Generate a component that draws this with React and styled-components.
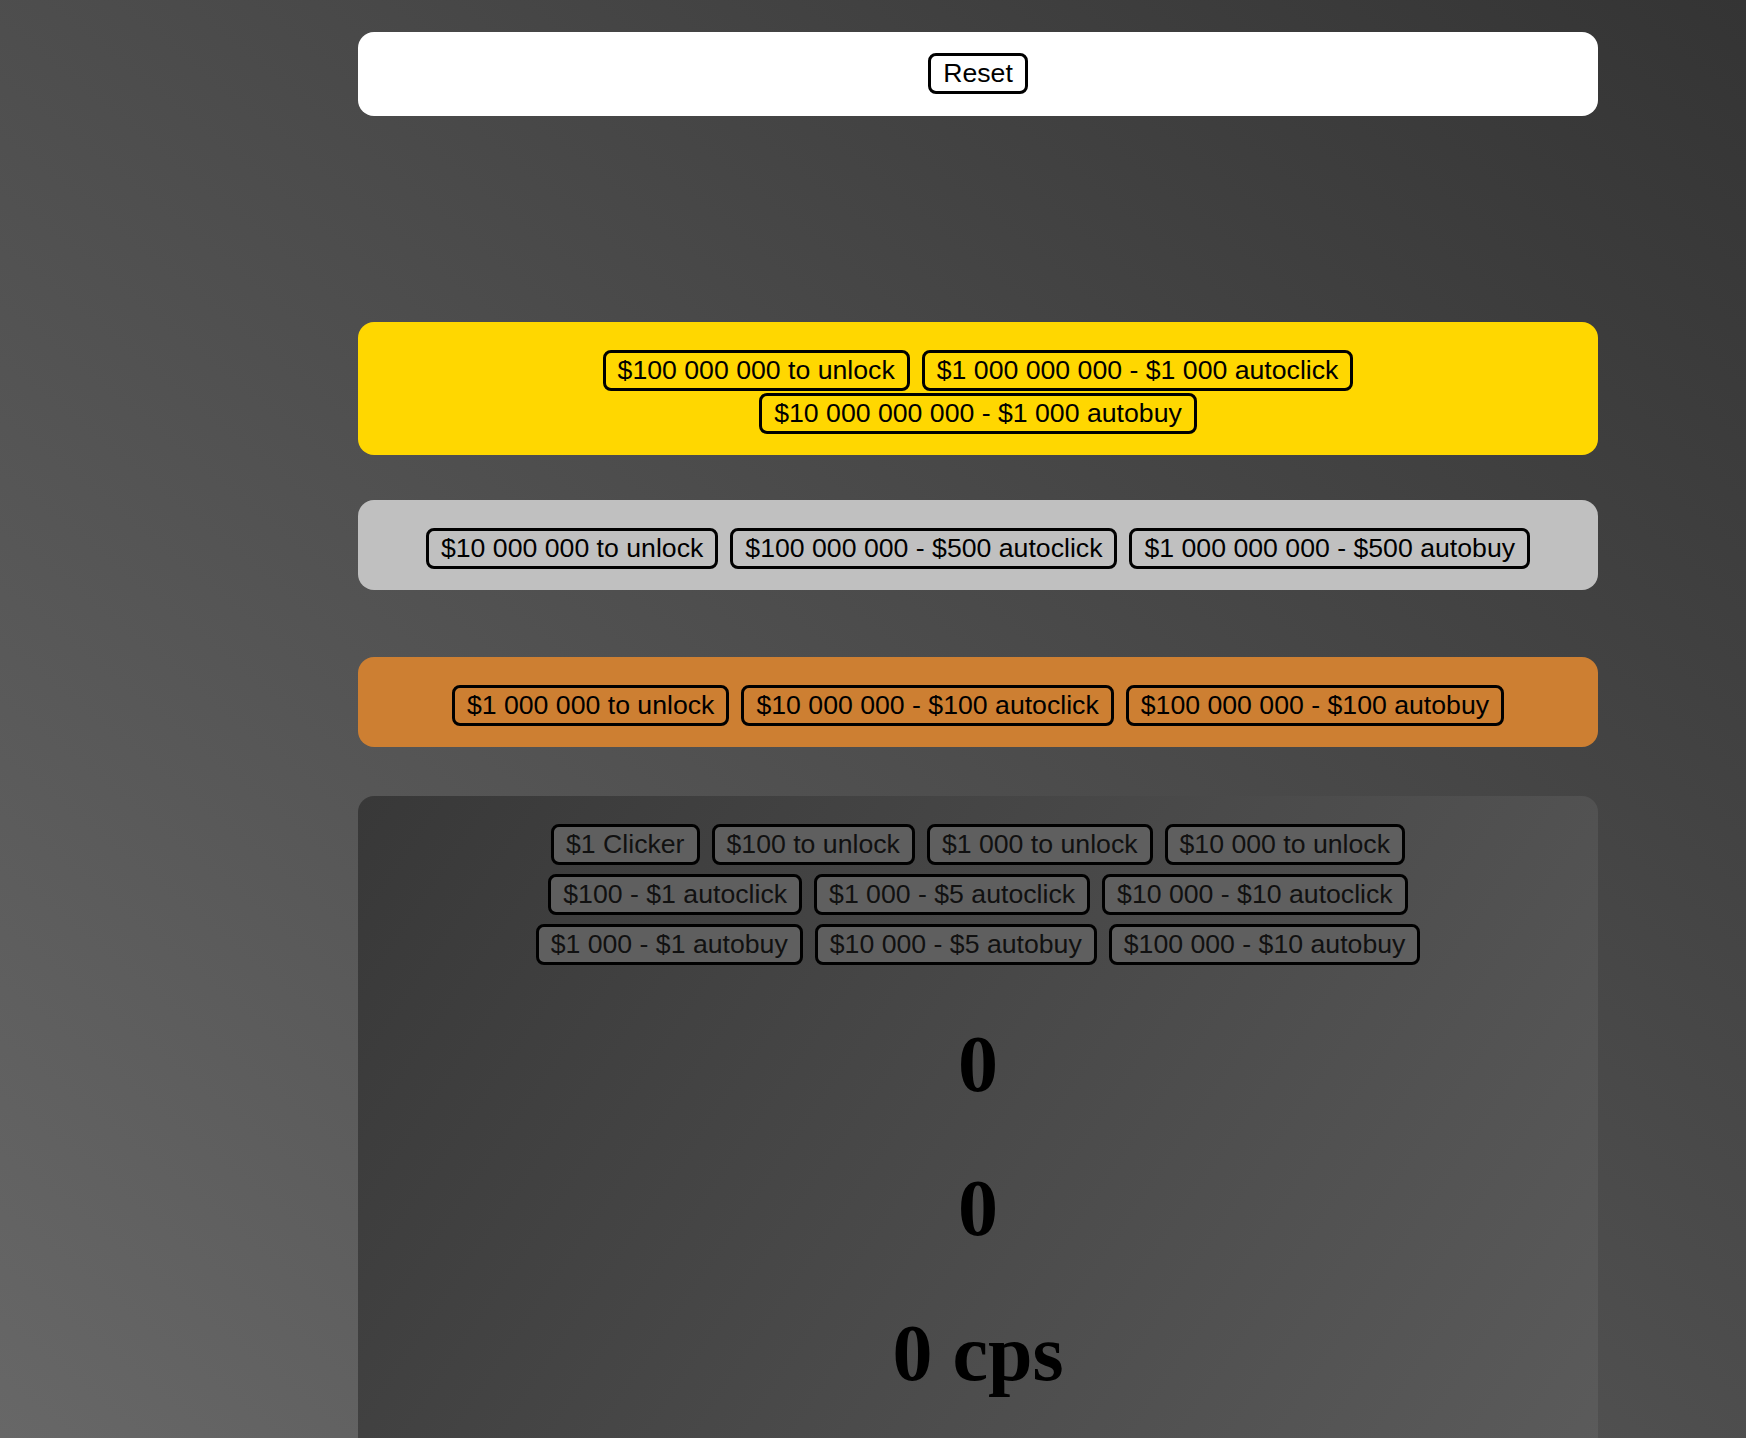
import styled, { createGlobalStyle } from 'styled-components';

const GlobalStyle = createGlobalStyle`
  html {
    min-height: 100%;
    background: linear-gradient(to top right, #676767, #343434) fixed;
  }
  body {
    margin: 0;
    font-family: 'Liberation Serif', 'Times New Roman', serif;
  }
`;

const tiers = [
  {
    name: 'gold',
    bg: '#ffd700',
    gap: 206,
    items: [
      '$100 000 000 to unlock',
      '$1 000 000 000 - $1 000 autoclick',
      '$10 000 000 000 - $1 000 autobuy',
    ],
  },
  {
    name: 'silver',
    bg: '#c0c0c0',
    gap: 45,
    items: [
      '$10 000 000 to unlock',
      '$100 000 000 - $500 autoclick',
      '$1 000 000 000 - $500 autobuy',
    ],
  },
  {
    name: 'bronze',
    bg: '#cd7f32',
    gap: 67,
    items: [
      '$1 000 000 to unlock',
      '$10 000 000 - $100 autoclick',
      '$100 000 000 - $100 autobuy',
    ],
  },
];

const baseRows = [
  ['$1 Clicker', '$100 to unlock', '$1 000 to unlock', '$10 000 to unlock'],
  ['$100 - $1 autoclick', '$1 000 - $5 autoclick', '$10 000 - $10 autoclick'],
  ['$1 000 - $1 autobuy', '$10 000 - $5 autobuy', '$100 000 - $10 autobuy'],
];

const App = () => {
  return (
    <>
      <GlobalStyle />
      <Page>
        <TopBar>
          <Button $bg="#fff">Reset</Button>
        </TopBar>

        {tiers.map((tier) => (
          <Panel key={tier.name} $bg={tier.bg} $gap={tier.gap}>
            <Wrap>
              {tier.items.map((label) => (
                <Button key={label}>{label}</Button>
              ))}
            </Wrap>
          </Panel>
        ))}

        <BasePanel>
          <Rows>
            {baseRows.map((row, i) => (
              <Row key={i}>
                {row.map((label) => (
                  <Button key={label} $bg="#5f5f5f" $color="#111">
                    {label}
                  </Button>
                ))}
              </Row>
            ))}
          </Rows>
          <Counter>0</Counter>
          <Counter>0</Counter>
          <Counter>0 cps</Counter>
        </BasePanel>
      </Page>
    </>
  );
};

export default App;

const Page = styled.div`
  width: 1240px;
  padding: 32px 0 0 358px;
`;

const TopBar = styled.div`
  background: #fff;
  border-radius: 16px;
  padding: 21px 0 22px;
  display: flex;
  justify-content: center;
`;

const Panel = styled.section`
  margin-top: ${(p) => p.$gap}px;
  background: ${(p) => p.$bg};
  border-radius: 16px;
  padding: 28px 24px 21px;
`;

const Wrap = styled.div`
  display: flex;
  flex-wrap: wrap;
  justify-content: center;
  gap: 2px 12px;
`;

const Button = styled.button`
  font-family: 'Liberation Sans', Arial, sans-serif;
  font-size: 20pt;
  line-height: normal;
  color: ${(p) => p.$color || '#000'};
  background: ${(p) => p.$bg || 'transparent'};
  border: 3px solid #000;
  border-radius: 8px;
  padding: 2px 12px;
  margin: 0;
  cursor: pointer;
`;

const BasePanel = styled.section`
  margin-top: 49px;
  background: linear-gradient(124deg, #383838, #5b5b5b);
  border-radius: 16px;
  padding: 28px 24px 20px;
`;

const Rows = styled.div`
  display: flex;
  flex-direction: column;
  gap: 9px;
`;

const Row = styled.div`
  display: flex;
  justify-content: center;
  gap: 12px;
`;

const Counter = styled.h1`
  margin: 0.67em 0;
  font-family: 'Liberation Serif', 'Times New Roman', serif;
  font-size: 80px;
  font-weight: bold;
  color: #000;
  text-align: center;
`;
